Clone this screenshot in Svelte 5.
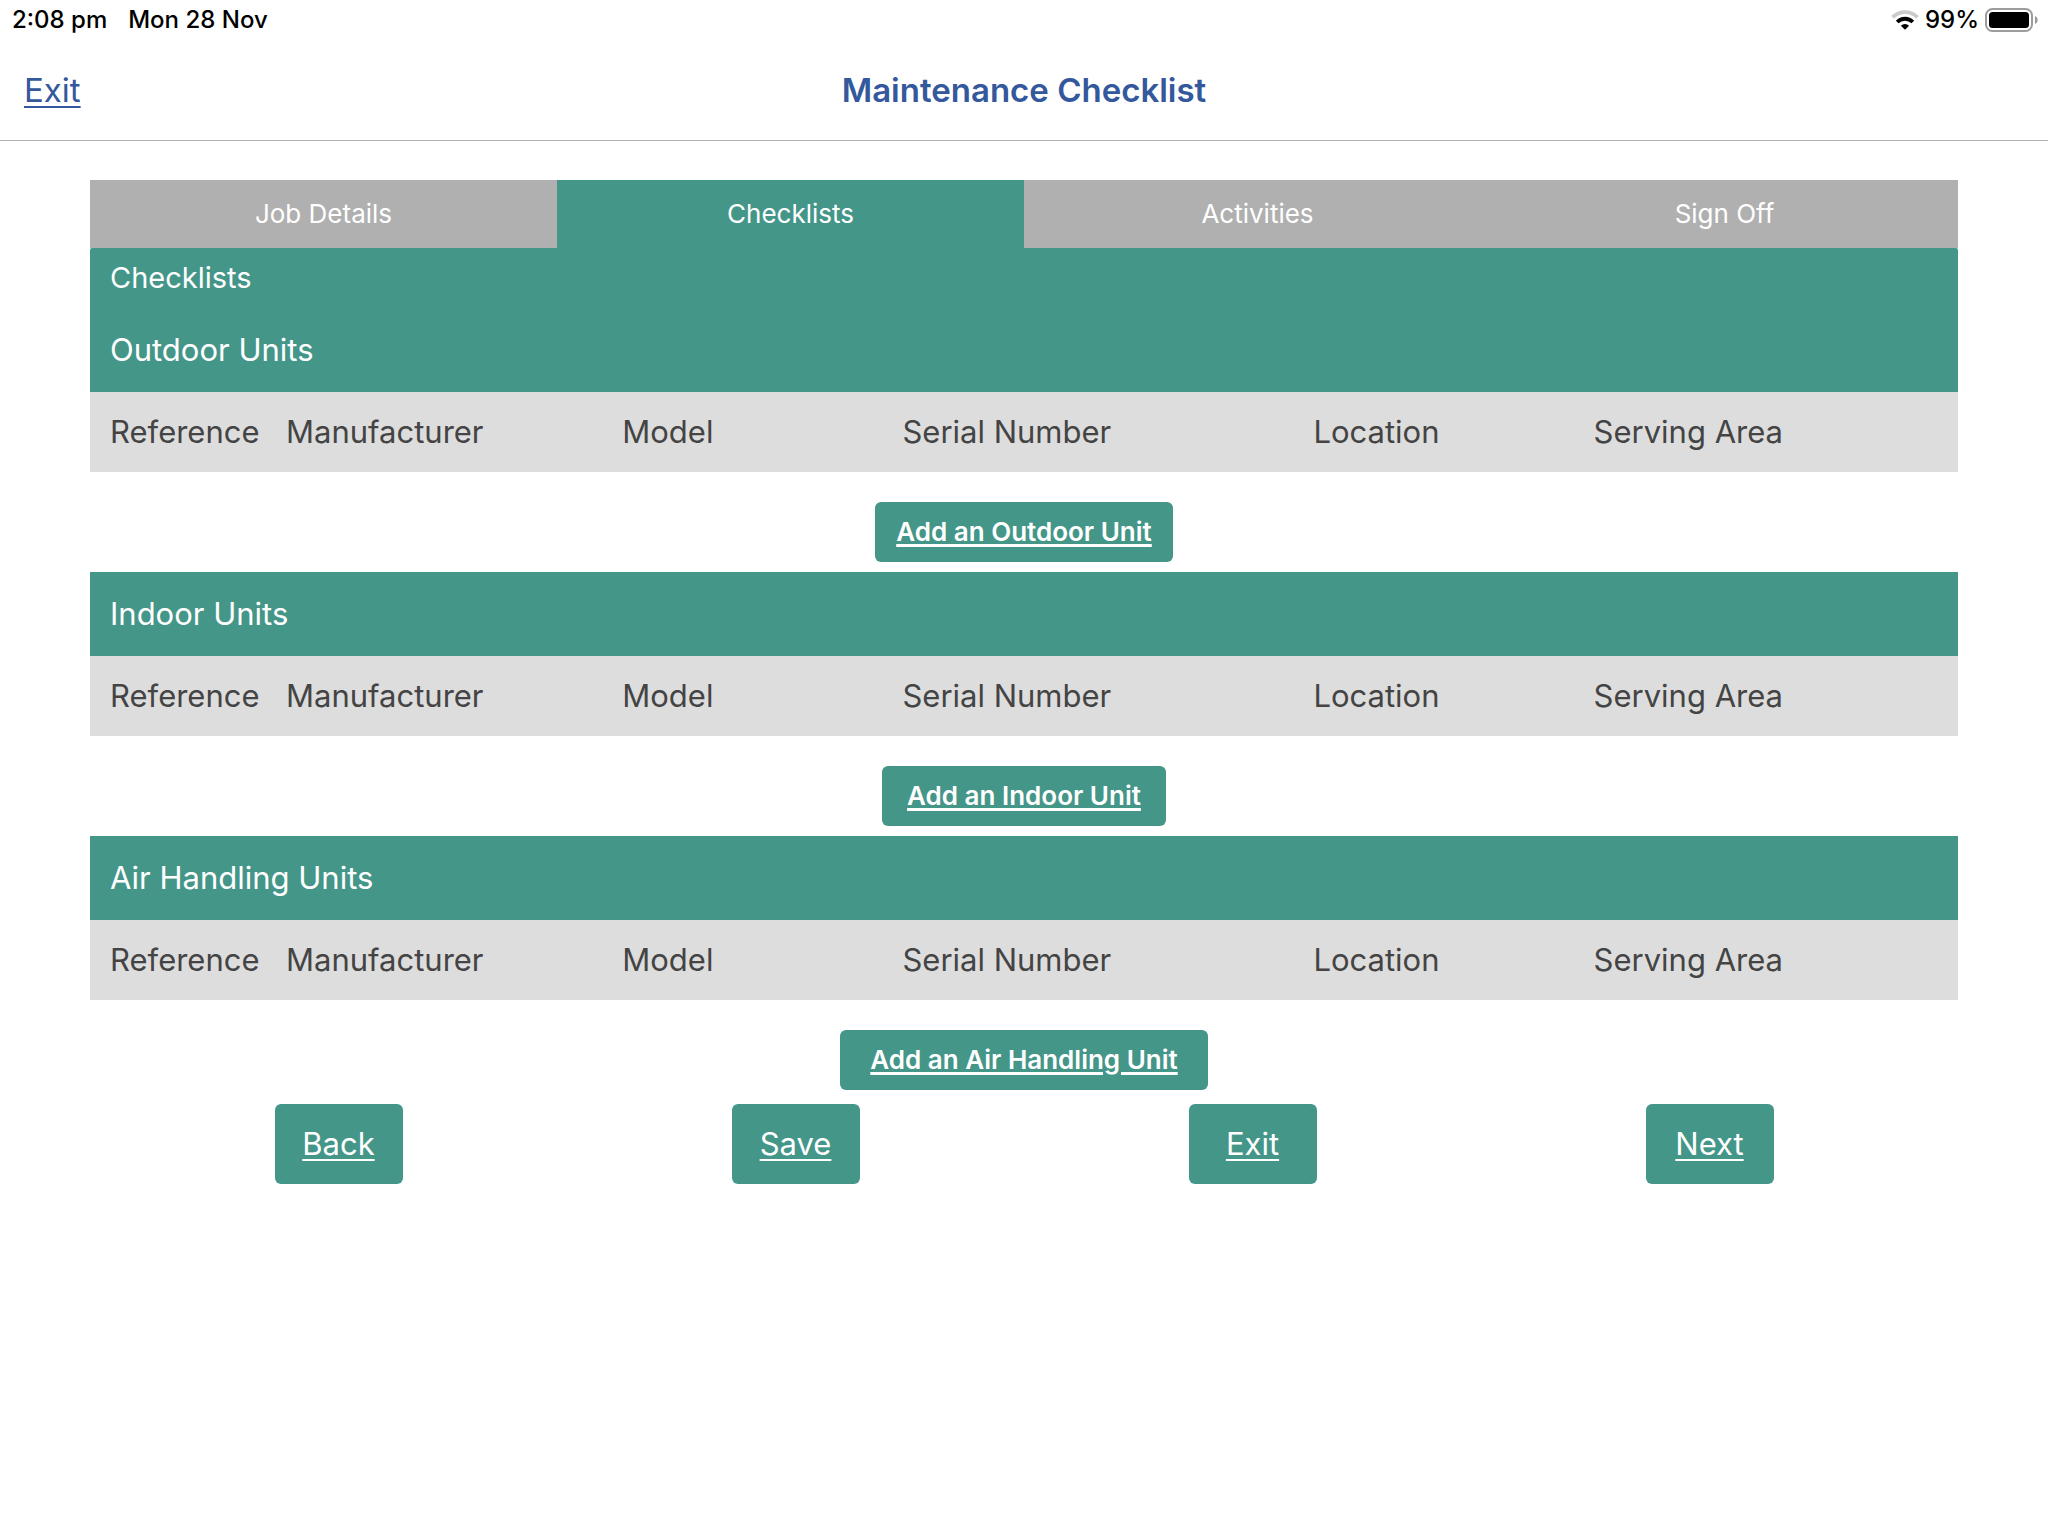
<script lang="ts">
  interface Unit {
    title: string
    addLabel: string
    addWidth: number
  }

  const tabs = ['Job Details', 'Checklists', 'Activities', 'Sign Off']

  const columns = [
    { key: 'reference', label: 'Reference' },
    { key: 'manufacturer', label: 'Manufacturer' },
    { key: 'model', label: 'Model' },
    { key: 'serial', label: 'Serial Number' },
    { key: 'location', label: 'Location' },
    { key: 'area', label: 'Serving Area' }
  ]

  const units: Unit[] = [
    { title: 'Outdoor Units', addLabel: 'Add an Outdoor Unit', addWidth: 298 },
    { title: 'Indoor Units', addLabel: 'Add an Indoor Unit', addWidth: 284 },
    { title: 'Air Handling Units', addLabel: 'Add an Air Handling Unit', addWidth: 368 }
  ]

  const actions = ['Back', 'Save', 'Exit', 'Next']

  let activeTab = $state('Checklists')
</script>

<div class="status-bar">
  <div class="status-group">
    <span>2:08 pm</span>
    <span>Mon 28 Nov</span>
  </div>
  <div class="status-right">
    <svg class="wifi" viewBox="0 0 28 20" aria-hidden="true">
      <path d="M1.6 7.4 A17.4 17.4 0 0 1 26.4 7.4" fill="none" stroke="#cbcbcb" stroke-width="3.8" />
      <path d="M6.2 12 A11 11 0 0 1 21.8 12" fill="none" stroke="#000" stroke-width="3.8" />
      <path d="M14 19.8 L9.9 15.8 A5.8 5.8 0 0 1 18.1 15.8 Z" fill="#000" />
    </svg>
    <span>99%</span>
    <svg class="battery" viewBox="0 0 54 24" aria-hidden="true">
      <rect x="1" y="1" width="46" height="22" rx="6.5" fill="none" stroke="#9c9c9c" stroke-width="2" />
      <rect x="4" y="4" width="40" height="16" rx="3.5" fill="#000" />
      <path d="M50 8 C53.6 9.2 53.6 14.8 50 16 Z" fill="#9c9c9c" />
    </svg>
  </div>
</div>

<header class="header">
  <a class="header-exit" href="#exit">Exit</a>
  <h1>Maintenance Checklist</h1>
</header>

<main class="content">
  <nav class="tabs">
    {#each tabs as tab}
      <button class="tab" class:active={tab === activeTab} onclick={() => (activeTab = tab)}>{tab}</button>
    {/each}
  </nav>

  <h2 class="page-title">Checklists</h2>

  {#each units as unit}
    <section class="unit">
      <h3>{unit.title}</h3>
      <table>
        <thead>
          <tr>
            {#each columns as column}
              <th class={column.key} scope="col">{column.label}</th>
            {/each}
          </tr>
        </thead>
      </table>
      <button class="add-button" style="width: {unit.addWidth}px">{unit.addLabel}</button>
    </section>
  {/each}

  <div class="actions">
    {#each actions as action}
      <button class="action-button">{action}</button>
    {/each}
  </div>
</main>

<style>
  :global(body) {
    background: #fff;
    font-family: Inter, 'Liberation Sans', sans-serif;
  }

  button {
    border: none;
    padding: 0 0 2px;
    font-family: inherit;
    color: #fff;
    cursor: pointer;
  }

  h1,
  h2,
  h3 {
    margin: 0;
  }

  .status-bar {
    display: flex;
    align-items: center;
    justify-content: space-between;
    height: 40px;
    padding: 0 9px 0 12px;
    font-size: 24px;
    font-weight: 500;
    line-height: 28px;
    color: #000;
  }

  .status-group {
    display: flex;
    gap: 21px;
  }

  .status-right {
    display: flex;
    align-items: center;
    gap: 6px;
  }

  .wifi {
    width: 28px;
    height: 20px;
  }

  .battery {
    width: 54px;
    height: 24px;
  }

  .header {
    display: grid;
    grid-template-columns: 1fr auto 1fr;
    align-items: center;
    height: 100px;
    padding: 0 24px;
    border-bottom: 1px solid #b2b2b2;
    color: #34589c;
  }

  .header-exit {
    justify-self: start;
    font-size: 33px;
    color: inherit;
    text-decoration-thickness: 2px;
    text-underline-offset: 4px;
  }

  h1 {
    font-size: 33px;
    font-weight: 600;
  }

  .content {
    padding: 39px 90px;
  }

  .tabs {
    display: grid;
    grid-template-columns: repeat(4, 1fr);
  }

  .tab {
    height: 68px;
    background: #b0b0b0;
    font-size: 26px;
  }

  .tab.active {
    background: #449689;
  }

  .page-title {
    padding: 0 20px;
    border-radius: 2px 2px 0 0;
    background: #449689;
    color: #fff;
    font-size: 29px;
    font-weight: 400;
    line-height: 60px;
  }

  .unit {
    display: flex;
    flex-direction: column;
    align-items: center;
    margin-bottom: 10px;
  }

  h3 {
    box-sizing: border-box;
    width: 100%;
    padding: 0 20px;
    background: #449689;
    color: #fff;
    font-size: 31px;
    font-weight: 400;
    line-height: 84px;
  }

  table {
    width: 100%;
    table-layout: fixed;
    border-collapse: collapse;
    background: #ddd;
  }

  th {
    box-sizing: border-box;
    height: 80px;
    padding: 0 0 2px 20px;
    color: #444;
    font-size: 31px;
    font-weight: 400;
    text-align: left;
    white-space: nowrap;
  }

  .reference {
    width: 176px;
  }

  .manufacturer {
    width: 18%;
  }

  .model,
  .location {
    width: 15%;
  }

  .serial {
    width: 22%;
  }

  .add-button {
    height: 60px;
    margin-top: 30px;
    border-radius: 6px;
    background: #449689;
    font-size: 26px;
    font-weight: 600;
    text-decoration: underline;
    text-decoration-thickness: 3px;
    text-underline-offset: 3px;
  }

  .actions {
    display: grid;
    grid-template-columns: repeat(4, 1fr);
    justify-items: center;
    margin-top: 14px;
    padding: 0 20px;
  }

  .action-button {
    width: 128px;
    height: 80px;
    border-radius: 6px;
    background: #449689;
    font-size: 31px;
    text-decoration: underline;
    text-decoration-thickness: 2px;
    text-underline-offset: 4px;
  }
</style>
